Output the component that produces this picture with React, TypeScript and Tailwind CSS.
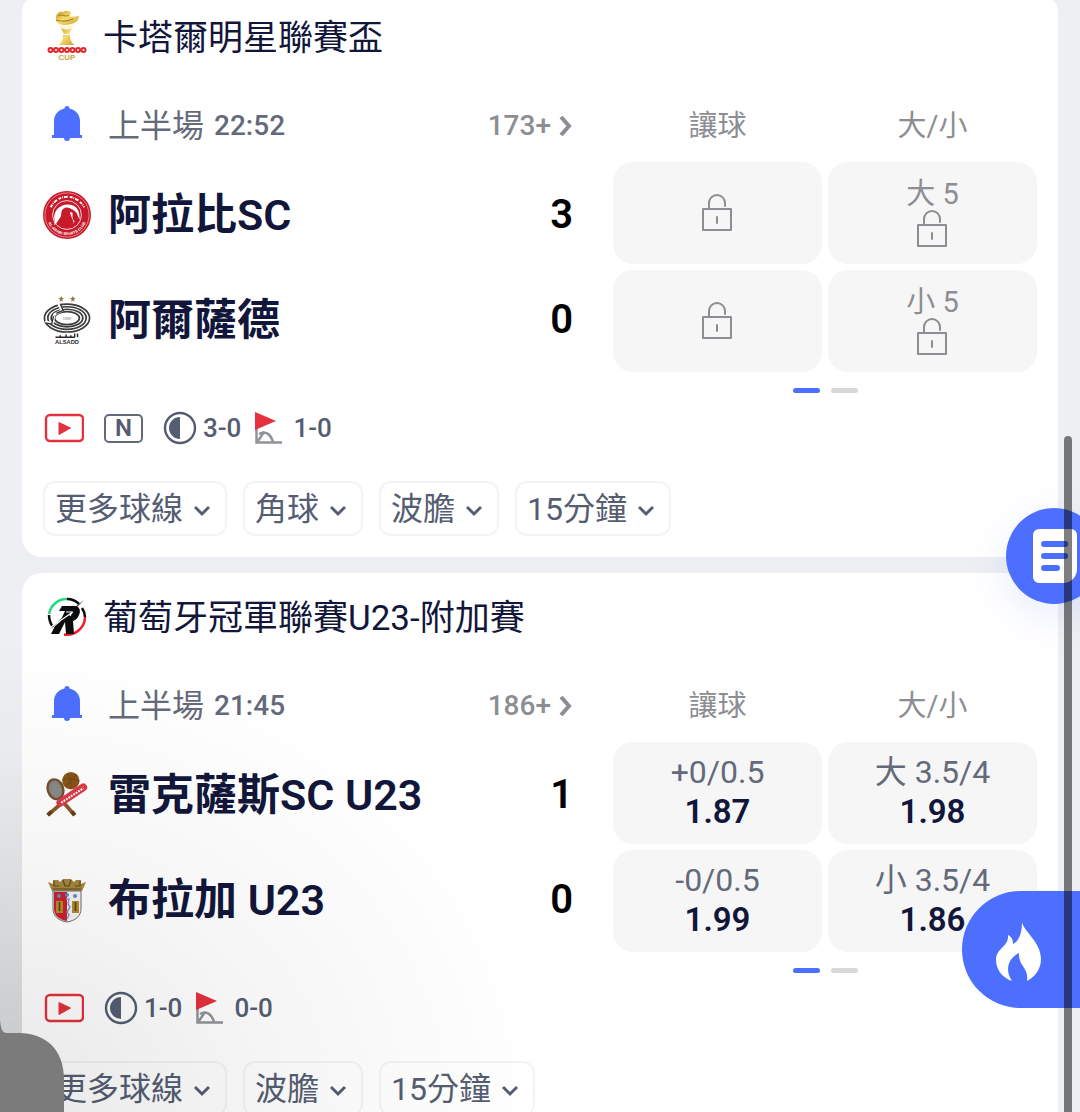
import React from "react";

const ink = "text-[#12163a]";

type Cell = { line?: string; odds?: string; locked?: boolean };
type Match = {
  league: string;
  leagueLogo: React.ReactNode;
  clock: string;
  more: string;
  teams: { name: string; score: string; logo: React.ReactNode }[];
  cells: Cell[];
  neutral: boolean;
  half: string;
  corners: string;
  chips: string[];
};

function CupLogo() {
  return (
    <svg viewBox="0 0 40 52" className="h-[52px] w-10" aria-hidden="true">
      <defs>
        <linearGradient id="gold" x1="0" x2="1" y1="0" y2="1">
          <stop offset="0" stopColor="#c4941f" />
          <stop offset=".45" stopColor="#f5dc72" />
          <stop offset="1" stopColor="#cf9f2e" />
        </linearGradient>
      </defs>
      <path d="M9 5c1-3 4-5 7-4 3-2 7-1 8 1l-1 4 9-1c0 4-3 7-8 8-5 2-13 1-15-3z" fill="url(#gold)" />
      <path d="M11 5c5-3 7 2 11-1M9 9c6 2 12 1 17-1" stroke="#a37718" strokeWidth="1" fill="none" />
      <path d="M12 14c5 2 11 2 15-1-1 3-3 5-5 6h-5c-3-1-4-3-5-5z" fill="#fdf4cf" />
      <path d="M14 17c4 2 7 2 11 0l-3 6h-5zM16 24h7c0 4 1 8 5 10H11c4-2 5-6 5-10z" fill="url(#gold)" />
      <g fill="#fff" stroke="#e0262e" strokeWidth="2">
        <circle cx="3.500" cy="39" r="2" /><circle cx="9" cy="39" r="2" /><circle cx="14.500" cy="39" r="2" />
        <circle cx="20" cy="39" r="2" /><circle cx="25.500" cy="39" r="2" /><circle cx="31" cy="39" r="2" />
        <circle cx="36.500" cy="39" r="2" />
      </g>
      <text x="20" y="49" textAnchor="middle" fontSize="8" fontWeight="700" fontFamily="Liberation Sans, sans-serif" fill="#cfa63c">CUP</text>
    </svg>
  );
}

function RevelationLogo() {
  return (
    <svg viewBox="0 0 40 40" className="size-10" fill="none" aria-hidden="true">
      <path d="M2 17A18 18 0 0 1 20 2" stroke="#22d880" strokeWidth="2.500" />
      <path d="M38 20A18 18 0 0 1 17 37.500" stroke="#f01824" strokeWidth="2.500" />
      <path d="M2 18c0 5 1 8 4 12M20 2c5 0 9 2 12 5M35 11c2 3 3 6 3 9" stroke="#0b0b0d" strokeWidth="2.500" />
      <path d="M15 9h12c6 0 7 5 5 9-1 3-3 5-6 6l1 13h-8l-1-12-6 12H4l4-8 5-4 5-11h-6z" fill="#0b0b0d" />
      <path d="m4 31 12-11L37 3 26 14z" fill="#0b0b0d" />
      <path d="M4 30 20 19l6-4M19 15h6l-2 4" stroke="#fff" strokeWidth="1.200" />
    </svg>
  );
}

function ArabiLogo() {
  return (
    <svg viewBox="0 0 50 50" className="size-12" aria-hidden="true">
      <defs>
        <path id="arabi-lower" d="M4 25a21 21 0 0 0 42 0" />
      </defs>
      <circle cx="25" cy="25" r="25" fill="#c8192b" />
      <circle cx="25" cy="25" r="23" fill="none" stroke="#f0b9be" strokeWidth=".7" />
      <circle cx="25" cy="25" r="15" fill="#c8192b" stroke="#f7dcde" strokeWidth="1" />
      <path d="M12 31c-2-10 5-17 14-17 8 0 13 6 12 16l-3-7c-2-3-5-3-5-5 2 8-1 9 3 14-4 5-14 5-17-1l-4 5z" fill="#fff" />
      <path d="M15 33c1-4 4-5 4-9 0-6 5-8 9-6 3 1 5 3 4 5l-4-1c1 5 3 7 4 11-4 5-13 5-17 0z" fill="#c8192b" />
      <path d="M8 17C13 8 20 6 26 6s13 4 17 11" fill="none" stroke="#fff" strokeWidth="2" strokeDasharray="3 1 1 1 4 2" />
      <text fontSize="4" fontWeight="700" fill="#fff" fontFamily="Liberation Sans, sans-serif">
        <textPath href="#arabi-lower" startOffset="50%" textAnchor="middle">AL-ARABI SPORTS CLUB</textPath>
      </text>
    </svg>
  );
}

function SaddLogo() {
  return (
    <svg viewBox="0 0 50 52" className="h-[52px] w-[50px]" fill="none" aria-hidden="true">
      <path d="m19 1 1 2h2l-2 2 1 2-2-1-2 1 1-2-2-2h2zM31 1l1 2h2l-2 2 1 2-2-1-2 1 1-2-2-2h2z" fill="#8b7a3e" />
      <g stroke="#3b3b3e" strokeWidth="1.800">
        <ellipse cx="25" cy="24" rx="23.500" ry="14.500" />
        <ellipse cx="25" cy="24" rx="20" ry="11.800" />
        <ellipse cx="25" cy="24" rx="16.500" ry="9.200" />
        <ellipse cx="25" cy="24" rx="13" ry="6.800" />
      </g>
      <path d="m16 9 4 7-8 4-2 9-8-1" stroke="#fff" strokeWidth="2.500" />
      <path d="m18 9 3 7-7 3M2 29l7 1 2-8" stroke="#3b3b3e" strokeWidth="1.500" />
      <text x="25" y="26" textAnchor="middle" fontSize="4" fill="#777" fontFamily="Liberation Sans, sans-serif">1969</text>
      <path d="M13 44h20M18 42v2M24 41v3M29 42v2M33 40v4M36 40v4" stroke="#29292c" strokeWidth="1.500" />
      <text x="25" y="51" textAnchor="middle" fontSize="6" fontWeight="700" fill="#29292c" fontFamily="Liberation Sans, sans-serif">ALSADD</text>
    </svg>
  );
}

function SportsLogo() {
  return (
    <svg viewBox="0 0 50 50" className="size-[50px]" fill="none" aria-hidden="true">
      <path d="m18 29 15 17M20 33 5 46" stroke="#8a5a23" strokeWidth="4" />
      <path d="m5 46 4-4M33 46l-3-4" stroke="#65401a" strokeWidth="4" />
      <ellipse cx="13" cy="19" rx="8" ry="10.500" transform="rotate(-18 13 19)" fill="#858585" stroke="#75502b" strokeWidth="2.500" />
      <path d="m9 14 8 11M8 19l6 7M12 13l7 9M16 13 9 24M19 18l-6 8" stroke="#969696" strokeWidth=".6" />
      <circle cx="29" cy="10" r="9" fill="#8a5418" />
      <path d="M20 9c6-2 12-1 18 2M25 2c4 5 5 10 4 17M35 4c-5 3-9 8-11 13" stroke="#6e4014" strokeWidth=".8" />
      <path d="M18 33 42 17" stroke="#dd3b48" strokeWidth="8" strokeLinecap="round" />
      <path d="M19 33 42 18" stroke="#fff" strokeWidth="2" strokeDasharray="2 1" />
    </svg>
  );
}

function BragaLogo() {
  return (
    <svg viewBox="0 0 40 46" className="h-[46px] w-10" aria-hidden="true">
      <path d="M1 5 6 7V3h5l2 2 3-3h8l3 3 2-2h5v4l5-2-4 9H5z" fill="#a4853c" />
      <path d="M7 4v5h5M16 3l2 6h4l2-6M33 4v5h-5M6 12h28" stroke="#5d4a20" strokeWidth="1.200" fill="none" />
      <path d="M6 14h28v18c0 7-6 12-14 13C12 44 6 39 6 32z" fill="#f1f1f4" stroke="#6d6c70" />
      <path d="M7 15h13v29C12 43 7 38 7 32z" fill="#c9202f" />
      <path d="M9 24h7v12H9zM25 24h7v12h-7z" fill="#b58b28" />
      <path d="M12.500 25v9M28.500 25v9" stroke="#4e3f1d" strokeWidth="1.500" />
      <g fill="#6488bd"><circle cx="12" cy="19" r="2" /><circle cx="20" cy="18" r="2" /><circle cx="28" cy="19" r="2" /></g>
      <path d="M19 22h3l-1 5 2 3-3 5 2 3-2 4" stroke="#8099bd" strokeWidth="1.500" fill="none" />
    </svg>
  );
}

function Bell() {
  return (
    <svg viewBox="0 0 30 36" className="h-9 w-[30px]" fill="#4c6fff" aria-hidden="true">
      <path d="M12.500 2.500a2.500 2.500 0 0 1 5 0C24 4 28 9 28 15v14h2v3H18a3 3 0 0 1-6 0H0v-3h2V15C2 9 6 4 12.500 2.500z" />
    </svg>
  );
}

function Lock() {
  return (
    <svg viewBox="0 0 32 37" className="h-[37px] w-8" fill="none" stroke="#8d8e93" strokeWidth="2" aria-hidden="true">
      <path d="M1 15h28v21H1zM7 15V9a8 8 0 0 1 16 0v3M15 23v6" strokeLinejoin="round" strokeLinecap="round" />
    </svg>
  );
}

function Video() {
  return (
    <svg viewBox="0 0 40 30" className="ml-px h-[30px] w-10" aria-hidden="true">
      <rect x="2" y="2" width="37" height="26" rx="4" fill="none" stroke="#e5303f" strokeWidth="2.400" />
      <path d="M15 9.500v12L26.500 15z" fill="#e5303f" stroke="#e5303f" strokeLinejoin="round" />
    </svg>
  );
}

function HalfIcon() {
  return (
    <svg viewBox="0 0 34 34" className="size-[34px]" aria-hidden="true">
      <circle cx="17" cy="17" r="15" fill="none" stroke="#555d72" strokeWidth="2.400" />
      <path d="M17 6v22a11 11 0 0 1 0-22z" fill="#555d72" />
    </svg>
  );
}

function CornerIcon() {
  return (
    <svg viewBox="0 0 28 34" className="h-[34px] w-7" fill="none" aria-hidden="true">
      <path d="M1.500 16v15.500H27" stroke="#909399" strokeWidth="2.500" />
      <path d="m3 30 6-9M4 23c7-4 12 1 14 8" stroke="#909399" strokeWidth="2.500" />
      <path d="M0 1v18l21-9z" fill="#e5303f" />
    </svg>
  );
}

function Chevron({ className, d }: { className: string; d: string }) {
  return (
    <svg viewBox="0 0 16 20" className={className} fill="none" stroke="currentColor" aria-hidden="true">
      <path d={d} />
    </svg>
  );
}

function OddsCell({ cell }: { cell: Cell }) {
  return (
    <button
      type="button"
      className={
        cell.locked
          ? "flex h-[102px] flex-col items-center justify-center rounded-[20px] bg-[#f6f6f7] pb-0.5 text-[29px] leading-8 text-[#8d8e93]"
          : "flex h-[102px] flex-col items-center justify-center rounded-[20px] bg-[#f6f6f7] pb-0.5 text-[32px] leading-10 text-[#646a7a]"
      }
      aria-label={cell.line ? undefined : "讓球"}
    >
      {cell.line && <span>{cell.line}</span>}
      {cell.locked ? <Lock /> : <span className={`text-[33px] font-semibold ${ink}`}>{cell.odds}</span>}
    </button>
  );
}

function MatchCard({ match }: { match: Match }) {
  return (
    <section className="rounded-[20px] bg-white px-[21px] pb-[21px]">
      <header className="flex h-[88px] items-center gap-3">
        <div className="flex w-12 justify-center">{match.leagueLogo}</div>
        <h2 className={`pt-1 text-[35px] leading-10 ${ink}`}>{match.league}</h2>
      </header>

      <div className="grid grid-cols-[5fr_4fr] gap-x-10">
        <div className="flex h-[81px] items-center pt-2 text-[#646a7a]">
          <button type="button" className="mb-1 flex w-12 justify-center" aria-label="通知"><Bell /></button>
          <span className="ml-[17px] text-[32px]">上半場</span>
          <time className="ml-2.5 text-[28px] font-medium">{match.clock}</time>
          <a href="#more" className="ml-auto flex items-center gap-1.5 text-[28px] font-medium text-[#8d8e93]">
            {match.more}
            <Chevron className="h-5 w-4 stroke-[4]" d="m4 1 8 9-8 9" />
          </a>
        </div>
        <div className="grid grid-cols-2 items-center gap-1.5 pt-2.5 text-center text-[29px] text-[#8d8e93]">
          <span>讓球</span>
          <span>大/小</span>
        </div>

        <div className="grid grid-rows-2">
          {match.teams.map((t) => (
            <div key={t.name} className="flex items-center">
              <div className="flex w-12 shrink-0 justify-center">{t.logo}</div>
              <h3 className={`ml-[17px] text-[43px] leading-[52px] font-semibold ${ink}`}>{t.name}</h3>
              <span className="ml-auto text-[40px] font-semibold text-black">{t.score}</span>
            </div>
          ))}
        </div>
        <div className="grid grid-cols-2 gap-1.5">
          {match.cells.map((c, i) => <OddsCell key={i} cell={c} />)}
        </div>
        <div className="col-start-2 flex justify-center gap-[11px] pt-4">
          <span className="h-[5px] w-[27px] rounded-full bg-[#4c6fff]" />
          <span className="h-[5px] w-[27px] rounded-full bg-[#d8d8da]" />
        </div>
      </div>

      <div className="mt-[18px] flex h-[34px] items-center text-[26px] font-medium text-[#555d72]">
        <Video />
        {match.neutral && (
          <span className="ml-5 flex h-[29px] w-[39px] items-center justify-center rounded-[5px] border-2 border-[#646a7a] text-2xl leading-6 font-semibold">
            N
          </span>
        )}
        <span className="ml-5 flex items-center gap-1.5"><HalfIcon />{match.half}</span>
        <span className="ml-3.5 flex items-center gap-2.5"><CornerIcon />{match.corners}</span>
      </div>

      <div className="mt-9 flex gap-4">
        {match.chips.map((c) => (
          <button
            key={c}
            type="button"
            className="flex h-[55px] items-center gap-[11px] rounded-xl border-2 border-[#f3f4f7] pr-[15px] pl-2.5 text-[32px] text-[#555d72]"
          >
            {c}
            <Chevron className="h-5 w-4 stroke-[3]" d="m1 8 7 7 7-7" />
          </button>
        ))}
      </div>
    </section>
  );
}

const matches: Match[] = [
  {
    league: "卡塔爾明星聯賽盃",
    leagueLogo: <CupLogo />,
    clock: "22:52",
    more: "173+",
    teams: [
      { name: "阿拉比SC", score: "3", logo: <ArabiLogo /> },
      { name: "阿爾薩德", score: "0", logo: <SaddLogo /> },
    ],
    cells: [{ locked: true }, { line: "大 5", locked: true }, { locked: true }, { line: "小 5", locked: true }],
    neutral: true,
    half: "3-0",
    corners: "1-0",
    chips: ["更多球線", "角球", "波膽", "15分鐘"],
  },
  {
    league: "葡萄牙冠軍聯賽U23-附加賽",
    leagueLogo: <RevelationLogo />,
    clock: "21:45",
    more: "186+",
    teams: [
      { name: "雷克薩斯SC U23", score: "1", logo: <SportsLogo /> },
      { name: "布拉加 U23", score: "0", logo: <BragaLogo /> },
    ],
    cells: [
      { line: "+0/0.5", odds: "1.87" },
      { line: "大 3.5/4", odds: "1.98" },
      { line: "-0/0.5", odds: "1.99" },
      { line: "小 3.5/4", odds: "1.86" },
    ],
    neutral: false,
    half: "1-0",
    corners: "0-0",
    chips: ["更多球線", "波膽", "15分鐘"],
  },
];

export default function App() {
  return (
    <div className="relative h-screen overflow-hidden bg-[#edeff2] font-[Roboto,'Noto_Sans_CJK_TC',sans-serif]">
      <main className="-mt-[7px] flex flex-col gap-4 px-[22px]">
        {matches.map((m) => <MatchCard key={m.league} match={m} />)}
      </main>

      <div className="pointer-events-none absolute bottom-0 left-0 h-[480px] w-[560px] bg-[radial-gradient(ellipse_at_bottom_left,rgba(0,0,0,0.09),rgba(0,0,0,0.04)_35%,transparent_70%)]" />
      <div className="pointer-events-none absolute bottom-0 left-0 h-[360px] w-[22px] bg-linear-to-b from-transparent to-black/10" />
      <svg viewBox="0 0 64 92" className="absolute bottom-0 left-0 h-[92px] w-16" fill="#7b7b7b" aria-hidden="true">
        <path d="M0 0c1 9 2 13 7 13h12c26 0 45 16 45 46v33H0z" />
      </svg>

      <button
        type="button"
        aria-label="注單"
        className="absolute top-[508px] -right-[22px] flex size-24 items-center rounded-full bg-[#4c6fff] pl-[27px] shadow-[0_12px_40px_rgba(76,111,255,0.12)]"
      >
        <svg viewBox="0 0 44 54" className="h-[54px] w-11" aria-hidden="true">
          <path d="M6 0h32a6 6 0 0 1 6 6v34c0 8-6 14-14 14H6a6 6 0 0 1-6-6V6a6 6 0 0 1 6-6z" fill="#fff" />
          <path d="M11 15h21M11 27h21M11 39h13" stroke="#4c6fff" strokeWidth="6" strokeLinecap="round" />
        </svg>
      </button>

      <button
        type="button"
        aria-label="熱門"
        className="absolute right-0 bottom-[104px] flex h-[117px] w-[118px] items-center rounded-l-full bg-[#4c6fff] pt-1 pl-[34px]"
      >
        <svg viewBox="0 0 45 60" className="h-[60px] w-[45px]" fill="#fff" aria-hidden="true">
          <path d="M26 0c2 10 19 20 19 37 0 10-6 18-14 22 2-14-9-15-8-28-10 5-15 16-7 28C7 56 0 48 0 38c0-12 13-13 12-25 4 2 5 5 5 9 6-3 9-11 9-22z" />
        </svg>
      </button>

      <div className="pointer-events-none absolute top-[436px] right-2 bottom-0 w-2 rounded-t-full bg-black/50" />
    </div>
  );
}
